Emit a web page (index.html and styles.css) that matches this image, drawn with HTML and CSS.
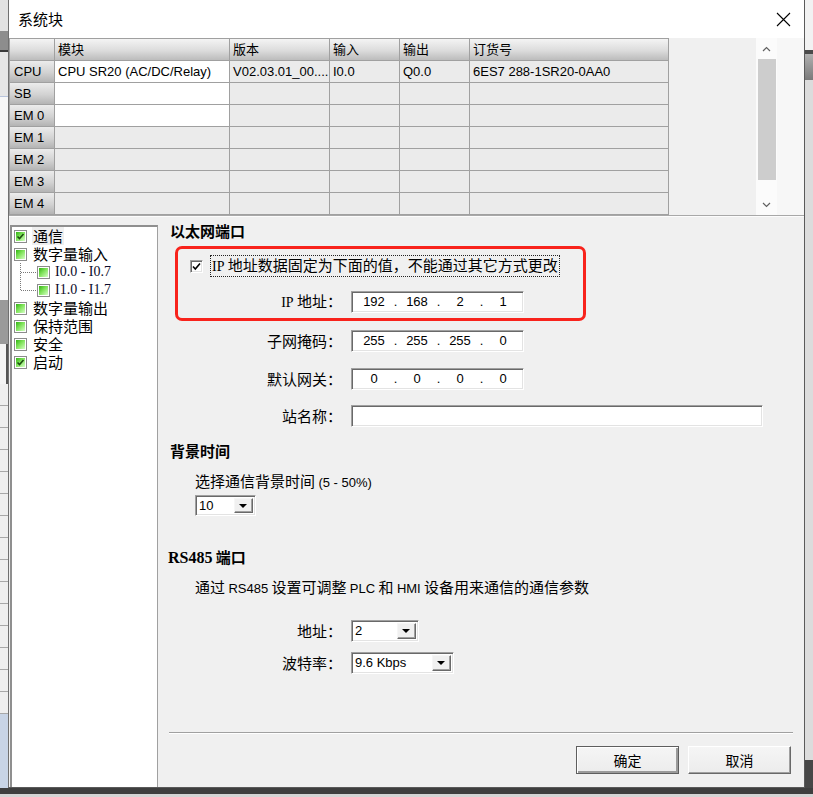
FILE: index.html
```html
<!DOCTYPE html>
<html lang="zh-CN">
<head>
<meta charset="utf-8">
<title>系统块</title>
<link rel="stylesheet" href="styles.css">
</head>
<body>
<div class="screen">
  <div class="bg-left">
    <div class="bl bl-a"></div>
    <div class="bl bl-b"></div>
    <div class="bl bl-c"></div>
    <div class="bl bl-d"></div>
    <div class="bl bl-e"></div>
    <div class="bl bl-f"></div>
    <div class="bl bl-g"></div>
    <div class="bl bl-h"></div>
    <div class="bl bl-i"></div>
  </div>

  <div class="dialog">
    <div class="titlebar">
      <span class="title">系统块</span>
      <svg class="close" width="15" height="15" viewBox="0 0 15 15"><path d="M1 1L14 14M14 1L1 14" stroke="#000" stroke-width="1.1" fill="none"/></svg>
    </div>

    <div class="gridarea">
      <div class="grid">
        <div class="hc"></div><div class="hc">模块</div><div class="hc">版本</div><div class="hc">输入</div><div class="hc">输出</div><div class="hc">订货号</div>
        <div class="rh">CPU</div><div class="c w">CPU SR20 (AC/DC/Relay)</div><div class="c">V02.03.01_00....</div><div class="c">I0.0</div><div class="c">Q0.0</div><div class="c">6ES7 288-1SR20-0AA0</div>
        <div class="rh">SB</div><div class="c w"></div><div class="c"></div><div class="c"></div><div class="c"></div><div class="c"></div>
        <div class="rh">EM 0</div><div class="c w"></div><div class="c"></div><div class="c"></div><div class="c"></div><div class="c"></div>
        <div class="rh">EM 1</div><div class="c"></div><div class="c"></div><div class="c"></div><div class="c"></div><div class="c"></div>
        <div class="rh">EM 2</div><div class="c"></div><div class="c"></div><div class="c"></div><div class="c"></div><div class="c"></div>
        <div class="rh">EM 3</div><div class="c"></div><div class="c"></div><div class="c"></div><div class="c"></div><div class="c"></div>
        <div class="rh">EM 4</div><div class="c"></div><div class="c"></div><div class="c"></div><div class="c"></div><div class="c"></div>
      </div>
      <div class="gridfill"></div>
      <div class="vscroll">
        <div class="sarrow"><svg width="9" height="6" viewBox="0 0 9 6"><path d="M1 5L4.5 1.5L8 5" stroke="#606060" stroke-width="1.2" fill="none"/></svg></div>
        <div class="thumb"></div>
        <div class="track"></div>
        <div class="sarrow"><svg width="9" height="6" viewBox="0 0 9 6"><path d="M1 1L4.5 4.5L8 1" stroke="#606060" stroke-width="1.2" fill="none"/></svg></div>
      </div>
      <div class="gridright"></div>
    </div>

    <div class="lower">
      <div class="tree">
        <div class="ti"><span class="cb"><i><svg width="9" height="9" viewBox="0 0 9 9"><path d="M1.5 4.5L3.5 6.5L7.5 2" stroke="#1d4f10" stroke-width="1.6" fill="none"/></svg></i></span><span class="tl sel">通信</span></div>
        <div class="ti"><span class="cb"><i></i></span><span class="tl">数字量输入</span></div>
        <div class="ti sub"><svg class="conn" width="17" height="18" viewBox="0 0 17 18"><path d="M0.5 0V18M1 9.5H17" stroke="#7a7a7a" stroke-dasharray="1 1" fill="none"/></svg><span class="cb"><i></i></span><span class="tl io">I0.0 - I0.7</span></div>
        <div class="ti sub"><svg class="conn" width="17" height="18" viewBox="0 0 17 18"><path d="M0.5 0V9.5M1 9.5H17" stroke="#7a7a7a" stroke-dasharray="1 1" fill="none"/></svg><span class="cb"><i></i></span><span class="tl io">I1.0 - I1.7</span></div>
        <div class="ti"><span class="cb"><i></i></span><span class="tl">数字量输出</span></div>
        <div class="ti"><span class="cb"><i></i></span><span class="tl">保持范围</span></div>
        <div class="ti"><span class="cb"><i></i></span><span class="tl">安全</span></div>
        <div class="ti"><span class="cb"><i><svg width="9" height="9" viewBox="0 0 9 9"><path d="M1.5 4.5L3.5 6.5L7.5 2" stroke="#1d4f10" stroke-width="1.6" fill="none"/></svg></i></span><span class="tl">启动</span></div>
      </div>

      <div class="panel">
        <div class="heading h-eth">以太网端口</div>

        <div class="redbox">
          <div class="chkrow">
            <span class="chk"><svg width="9" height="9" viewBox="0 0 9 9"><path d="M1 4.5L3.3 7L8 1.5" stroke="#000" stroke-width="1.6" fill="none"/></svg></span>
            <span class="chklabel"><span class="ser">IP</span> 地址数据固定为下面的值，不能通过其它方式更改</span>
          </div>
          <div class="frow frow-in">
            <span class="lbl in"><span class="ser">IP</span> 地址：</span>
            <div class="field ip"><span class="seg">192</span><span class="dot">.</span><span class="seg">168</span><span class="dot">.</span><span class="seg">2</span><span class="dot">.</span><span class="seg">1</span></div>
          </div>
        </div>

        <div class="frow r-mask">
          <span class="lbl">子网掩码：</span>
          <div class="field ip"><span class="seg">255</span><span class="dot">.</span><span class="seg">255</span><span class="dot">.</span><span class="seg">255</span><span class="dot">.</span><span class="seg">0</span></div>
        </div>
        <div class="frow r-gw">
          <span class="lbl">默认网关：</span>
          <div class="field ip"><span class="seg">0</span><span class="dot">.</span><span class="seg">0</span><span class="dot">.</span><span class="seg">0</span><span class="dot">.</span><span class="seg">0</span></div>
        </div>
        <div class="frow r-name">
          <span class="lbl">站名称：</span>
          <div class="field name"></div>
        </div>

        <div class="heading h-bg">背景时间</div>
        <div class="text t-bg">选择通信背景时间 <span class="lat">(5 - 50%)</span></div>
        <div class="combo c-bg"><span class="val">10</span><span class="drop"><i></i></span></div>

        <div class="heading h-rs"><span class="ser b">RS485</span> 端口</div>
        <div class="text t-rs">通过 <span class="lat">RS485</span> 设置可调整 <span class="lat">PLC</span> 和 <span class="lat">HMI</span> 设备用来通信的通信参数</div>

        <div class="frow r-addr">
          <span class="lbl">地址：</span>
          <div class="combo c-addr"><span class="val">2</span><span class="drop"><i></i></span></div>
        </div>
        <div class="frow r-baud">
          <span class="lbl">波特率：</span>
          <div class="combo c-baud"><span class="val">9.6 Kbps</span><span class="drop"><i></i></span></div>
        </div>

        <div class="sep"></div>
        <div class="buttons">
          <button class="btn def">确定</button>
          <button class="btn">取消</button>
        </div>
      </div>
    </div>
  </div>

  <div class="bg-right">
    <div class="br br-a"></div>
    <div class="br br-b"></div>
    <div class="br br-c"></div>
    <div class="br br-d"></div>
    <div class="br br-e"></div>
  </div>
</div>
<div class="bg-bottom">
  <div class="bb-top"></div>
  <div class="bb-low"></div>
</div>
</body>
</html>
```

FILE: styles.css
```css
* { box-sizing: border-box; }
html, body { margin: 0; padding: 0; }
body {
  width: 813px;
  height: 797px;
  overflow: hidden;
  background: #d8d8d8;
  font-family: "Liberation Sans", "Noto Sans CJK SC", sans-serif;
  color: #000;
}

.screen { display: flex; height: 788px; }

/* background application strips */
.bg-left { width: 8px; display: flex; flex-direction: column; }
.bl-a { height: 31px; background: #e2e2e2; }
.bl-b { height: 19px; background: #8d8d8d; }
.bl-c { height: 2px; background: #3a3a3a; }
.bl-d { height: 45px; background: #e6e6e6; border-bottom: 1px solid #b8c4dc; }
.bl-e { height: 203px; background: #f7f7f7; }
.bl-f { height: 44px; background: #9a9a9a; }
.bl-g { height: 40px; background: #f4f4f4; border-right: 2px solid #555; }
.bl-h { height: 330px; background: repeating-linear-gradient(#efefef 0 21px, #a8a8a8 21px 22px); }
.bl-i { flex: 1; background: #c8d4e6; }

.bg-right { width: 8px; display: flex; flex-direction: column; }
.br-a { height: 50px; background: #f2f2f2; }
.br-b { height: 4px; background: #4a4a4a; }
.br-c { height: 26px; background: linear-gradient(#b0b0b0, #7a7a7a); }
.br-d { flex: 1; background: #dcdcdc; }
.br-e { height: 28px; background: #474747; }

.bg-bottom { height: 9px; display: flex; flex-direction: column; }
.bb-top { height: 6px; background: #3e3e3e; }
.bb-low { flex: 1; background: #d4d4d4; }

/* dialog */
.dialog {
  width: 797px;
  height: 788px;
  background: #f0f0f0;
  border-left: 1px solid #707070;
  border-right: 1px solid #5a5a5a;
  border-bottom: 1px solid #5a5a5a;
  display: flex;
  flex-direction: column;
}

.titlebar {
  height: 38px;
  flex: none;
  background: #fff;
  display: flex;
  align-items: center;
  justify-content: space-between;
  padding: 0 13px 0 9px;
}
.title { font-family: "Noto Sans CJK SC", sans-serif; font-size: 15px; line-height: 20px; }
.close { display: block; }

/* module grid */
.gridarea {
  height: 178px;
  flex: none;
  display: flex;
  border-bottom: 1px solid #a8a8a8;
  background: #f0f0f0;
}
.grid {
  display: grid;
  grid-template-columns: 45px 175px 100px 70px 70px 199px;
  grid-template-rows: repeat(8, 22px);
  border-left: 1px solid #a0a0a0;
  border-top: 1px solid #a0a0a0;
  align-self: flex-start;
  font-size: 13px;
}
.grid > div {
  border-right: 1px solid #a0a0a0;
  border-bottom: 1px solid #a0a0a0;
  padding-left: 3px;
  line-height: 21px;
  white-space: nowrap;
  overflow: hidden;
}
.hc { background: linear-gradient(#f4f4f4, #dcdcdc 55%, #bcbcbc); }
.rh { background: linear-gradient(#ececec, #d2d2d2 55%, #b4b4b4); padding-left: 4px !important; }
.c { background: #ebebeb; }
.c.w { background: #fff; }
.gridfill { width: 87px; }
.vscroll {
  width: 21px;
  display: flex;
  flex-direction: column;
  background: #fbfbfb;
}
.sarrow { height: 21px; display: flex; align-items: center; justify-content: center; }
.thumb { height: 121px; margin: 0 1px 0 2px; background: #cdcdcd; }
.track { flex: 1; }
.gridright { flex: 1; background: #f7f7f7; }

/* lower part */
.lower { flex: 1; display: flex; border-top: 1px solid #fcfcfc; }

.tree {
  width: 148px;
  margin: 8px 0 0 1px;
  background: #fff;
  border-left: 2px solid #8f8f8f;
  border-top: 2px solid #8f8f8f;
  border-right: 1px solid #a0a0a0;
  padding-left: 2px;
  font-family: "Noto Sans CJK SC", sans-serif;
  font-size: 15px;
}
.ti { height: 18px; display: flex; align-items: center; gap: 6px; }
.ti.sub { padding-left: 6px; gap: 0; }
.ti.sub .cb { margin-right: 5px; }
.conn { display: block; flex: none; }
.cb {
  width: 13px; height: 13px; flex: none;
  border: 1px solid #8c8c8c;
  background: #fff;
  padding: 1px;
}
.cb i {
  display: block; width: 9px; height: 9px;
  background: linear-gradient(135deg, #33b314 0%, #7fe35a 45%, #d6ffc6 100%);
}
.cb i svg { display: block; }
.tl { line-height: 18px; white-space: nowrap; }
.tl.sel { background: #efefef; padding: 0 1px; margin-left: -1px; }
.tl.io { font-family: "Liberation Serif", serif; font-size: 14px; color: #0b0b2a; }

.panel {
  flex: 1;
  display: flex;
  flex-direction: column;
  align-items: flex-start;
  padding: 0 0 0 12px;
  font-family: "Noto Sans CJK SC", sans-serif;
  font-size: 15px;
}
.heading { font-weight: bold; line-height: 18px; white-space: nowrap; }
.h-eth { margin-top: 5px; }
.ser { font-family: "Liberation Serif", serif; font-size: 14px; }
.ser.b { font-weight: bold; font-size: 16px; }

.redbox {
  margin: 6px 0 0 5px;
  width: 411px;
  height: 75px;
  border: 3px solid #f8231c;
  border-radius: 7px;
  padding: 7px 0 0 12px;
}
.chkrow { display: flex; align-items: center; height: 20px; gap: 7px; }
.chk {
  width: 13px; height: 13px; flex: none;
  background: #fff;
  border-top: 1px solid #a0a0a0; border-left: 1px solid #a0a0a0;
  border-right: 1px solid #fff; border-bottom: 1px solid #fff;
  box-shadow: inset 1px 1px #696969, inset -1px -1px #e3e3e3;
  display: flex; align-items: center; justify-content: center;
}
.chk svg { display: block; }
.chklabel { border: 1px dotted #222; line-height: 18px; padding: 0 1px; white-space: nowrap; }

.frow { display: flex; align-items: center; gap: 9px; }
.lbl { width: 172px; text-align: right; line-height: 20px; white-space: nowrap; }
.lbl.in { width: 152px; }
.frow-in { margin-top: 15px; }
.r-mask { margin-top: 9px; }
.r-gw { margin-top: 16px; }
.r-name { margin-top: 15px; }

.field {
  height: 22px;
  background: #fff;
  border-top: 1px solid #a0a0a0; border-left: 1px solid #a0a0a0;
  border-right: 1px solid #fff; border-bottom: 1px solid #fff;
  box-shadow: inset 1px 1px #696969, inset -1px -1px #e3e3e3;
  font-family: "Liberation Sans", sans-serif;
  font-size: 13px;
}
.ip { width: 173px; display: flex; padding-left: 5px; line-height: 20px; }
.ip .seg { width: 34px; text-align: center; }
.ip .dot { width: 9px; text-align: center; }
.name { width: 412px; }

.h-bg { margin-top: 15px; }
.text { line-height: 18px; white-space: nowrap; margin-left: 25px; }
.lat { font-family: "Liberation Sans", sans-serif; font-size: 13px; }
.t-bg { margin-top: 12px; }

.combo {
  display: flex;
  height: 22px;
  background: #fff;
  border-top: 1px solid #a0a0a0; border-left: 1px solid #a0a0a0;
  border-right: 1px solid #fff; border-bottom: 1px solid #fff;
  box-shadow: inset 1px 1px #696969, inset -1px -1px #e3e3e3;
  padding: 2px;
  font-family: "Liberation Sans", sans-serif;
  font-size: 13px;
}
.combo .val { flex: 1; line-height: 16px; padding-left: 1px; }
.combo .drop {
  width: 19px;
  background: #f0f0f0;
  border-top: 1px solid #f6f6f6; border-left: 1px solid #f6f6f6;
  border-right: 1px solid #696969; border-bottom: 1px solid #696969;
  box-shadow: inset -1px -1px #a0a0a0;
  display: flex; align-items: center; justify-content: center;
}
.combo .drop i {
  display: block; width: 0; height: 0;
  border-left: 4px solid transparent;
  border-right: 4px solid transparent;
  border-top: 4px solid #000;
  margin-right: 1px;
}
.c-bg { width: 61px; height: 21px; margin: 3px 0 0 25px; }
.c-addr { width: 68px; }
.c-baud { width: 103px; }

.h-rs { margin: 32px 0 0 -2px; }
.t-rs { margin-top: 11px; }
.r-addr { margin-top: 22px; }
.r-baud { margin-top: 10px; }

.sep {
  margin: 58px 0 0 -1px;
  width: 624px;
  height: 2px;
  border-top: 1px solid #a0a0a0;
  border-bottom: 1px solid #fff;
}
.buttons {
  margin-top: 12px;
  width: 621px;
  display: flex;
  justify-content: flex-end;
  gap: 9px;
}
.btn {
  width: 103px;
  height: 28px;
  margin: 0;
  padding: 0;
  background: linear-gradient(#f5f5f5, #ececec);
  border-top: 1px solid #fff; border-left: 1px solid #fff;
  border-right: 1px solid #696969; border-bottom: 1px solid #696969;
  box-shadow: inset -1px -1px #a0a0a0;
  font-family: "Noto Sans CJK SC", sans-serif;
  font-size: 14px;
  color: #000;
}
.btn.def {
  border: 1px solid #5e5e5e;
  box-shadow: inset 1px 1px #fff, inset -2px -2px #9a9a9a;
}
```
